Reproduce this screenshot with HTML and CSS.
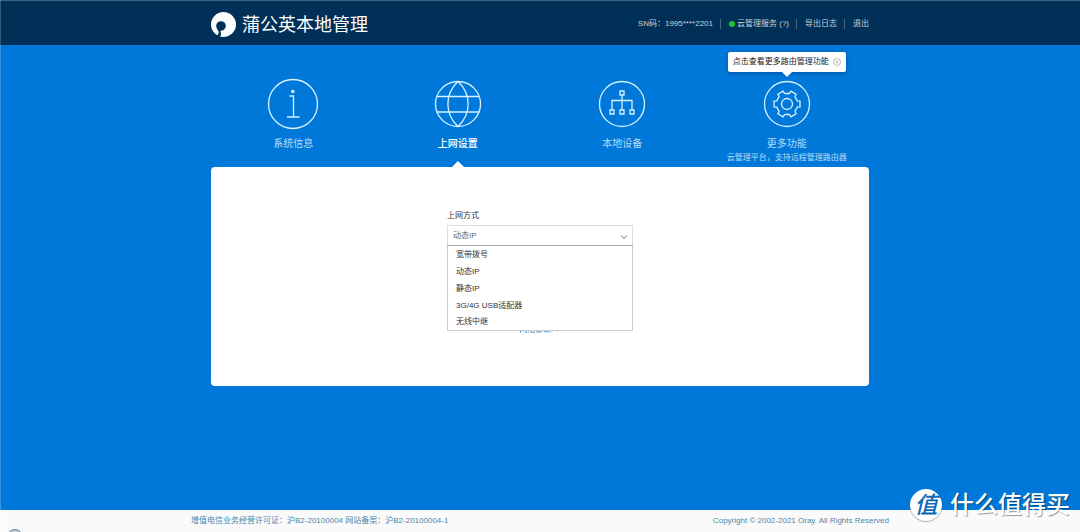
FILE: index.html
```html
<!DOCTYPE html>
<html lang="zh-CN">
<head>
<meta charset="utf-8">
<title>蒲公英本地管理</title>
<link rel="stylesheet" href="styles.css">
</head>
<body>
<header class="header">
  <div class="container header-inner">
    <div class="brand">
      <svg class="brand-logo" viewBox="0 0 24 24" aria-hidden="true">
        <circle cx="12" cy="12" r="12" fill="#fff"/>
        <circle cx="9.600" cy="13.400" r="4.600" fill="#003058"/>
        <path d="M5.400 15.500C6.200 17 7.600 18 7.400 20C7.300 21.200 6.600 22 5.600 22.500L8.200 24C9.600 22.800 10 21.200 9.400 19.600C9.100 18.600 9.200 17.800 9.800 17.300Z" fill="#003058"/>
      </svg>
      <h1 class="brand-name">蒲公英本地管理</h1>
    </div>
    <div class="tools">
      <span class="tool">SN码：1995****2201</span>
      <a class="tool" href="#cloud"><span class="status-dot"></span>云管理服务 (?)</a>
      <a class="tool" href="#log">导出日志</a>
      <a class="tool" href="#logout">退出</a>
    </div>
  </div>
</header>

<main class="main">
  <div class="container">
    <nav class="nav">
      <a class="nav-item" href="#info">
        <span class="nav-icon"><svg class="icon-large" viewBox="0 0 52 52" aria-hidden="true">
          <circle cx="26" cy="26" r="24.5"/>
          <path d="M22.500 18H26.500V39M20 39H32.500"/>
          <circle cx="25.800" cy="13.500" r="1.800" class="solid"/>
        </svg></span>
        <span class="nav-label">系统信息</span>
      </a>
      <a class="nav-item is-active" href="#network">
        <span class="nav-icon"><svg class="icon" viewBox="0 0 48 48" aria-hidden="true">
          <circle cx="24" cy="24" r="22.500"/>
          <path d="M24 1.500C10.500 14 10.500 34 24 46.500M24 1.500C37.500 14 37.500 34 24 46.500M3 16.500H45M3 32H45"/>
        </svg></span>
        <span class="nav-label">上网设置</span>
      </a>
      <a class="nav-item" href="#devices">
        <span class="nav-icon"><svg class="icon" viewBox="0 0 48 48" aria-hidden="true">
          <circle cx="24" cy="24" r="22.500"/>
          <path d="M22 11h4v4h-4zM12 30h4v4h-4zM22 30h4v4h-4zM32 30h4v4h-4zM24 15V30M14 30V20.500H34V30"/>
        </svg></span>
        <span class="nav-label">本地设备</span>
      </a>
      <div class="nav-item">
        <a class="nav-link" href="#more">
          <span class="nav-icon"><svg class="icon" viewBox="0 0 48 48" aria-hidden="true">
            <circle cx="24" cy="24" r="22.500"/>
            <circle cx="24" cy="24" r="5.500"/>
            <path d="M34.300 20.800L37 21V27L34.300 27.200L31.900 31.300L33.100 33.800L27.900 36.800L26.400 34.500H21.600L20.100 36.800L14.900 33.800L16.100 31.300L13.700 27.200L11 27V21L13.700 20.800L16.100 16.700L14.900 14.200L20.100 11.200L21.600 13.500H26.400L27.900 11.200L33.100 14.200L31.900 16.700Z"/>
          </svg></span>
          <span class="nav-label">更多功能</span>
          <span class="nav-note">云管理平台，支持远程管理路由器</span>
        </a>
        <div class="tip" role="status">
          <span>点击查看更多路由管理功能</span>
          <button class="tip-close" type="button" aria-label="关闭">
            <svg viewBox="0 0 8 8" aria-hidden="true"><circle cx="4" cy="4" r="3.500"/><path d="M2.500 2.500L5.500 5.500M5.500 2.500L2.500 5.500"/></svg>
          </button>
        </div>
      </div>
    </nav>

    <section class="card">
      <form class="form">
        <label class="field-label" for="mode">上网方式</label>
        <div class="select-wrap">
          <select class="select" id="mode">
            <option>宽带拨号</option>
            <option selected>动态IP</option>
            <option>静态IP</option>
            <option>3G/4G USB适配器</option>
            <option>无线中继</option>
          </select>
          <svg class="chevron" viewBox="0 0 8 6" aria-hidden="true"><path d="M1 1.500L4 4.500L7 1.500"/></svg>
          <ul class="options" role="listbox" aria-label="上网方式">
            <li class="option" role="option">宽带拨号</li>
            <li class="option" role="option" aria-selected="true">动态IP</li>
            <li class="option" role="option">静态IP</li>
            <li class="option" role="option">3G/4G USB适配器</li>
            <li class="option" role="option">无线中继</li>
          </ul>
        </div>
        <a class="diagnose" href="#diagnose">网络诊断&gt;&gt;</a>
      </form>
    </section>
  </div>
</main>

<footer class="footer">
  <div class="footer-inner">
    <span>增值电信业务经营许可证：沪B2-20100004 网站备案：沪B2-20100004-1</span>
    <span>Copyright © 2002-2021 Oray. All Rights Reserved</span>
  </div>
</footer>

<div class="corner-badge"></div>
<div class="watermark"><span class="watermark-seal">值</span><span>什么值得买</span></div>
</body>
</html>
```

FILE: styles.css
```css
* { box-sizing: border-box; }

body {
  display: flex;
  flex-direction: column;
  position: relative;
  min-height: 100vh;
  margin: 0;
  overflow: hidden;
  background: #0078d9;
  font-family: "Liberation Sans", "Noto Sans CJK SC", sans-serif;
  font-size: 8px;
  line-height: 12px;
  color: #444;
}

/* Light hairline down the left edge of the page */
body::before {
  content: "";
  position: absolute;
  top: 0;
  bottom: 0;
  left: 0;
  width: 1px;
  background: rgba(255, 255, 255, .2);
}

a { color: inherit; text-decoration: none; }

.container {
  width: 100%;
  max-width: 658px;
  margin: 0 auto;
}

.header {
  background: #003058;
  border-top: 1px solid #3c627f;
}

.header-inner {
  display: flex;
  align-items: center;
  justify-content: space-between;
  height: 44px;
}

.brand { display: flex; align-items: center; gap: 6px; padding-top: 3px; }
.brand-logo { width: 25px; height: 25px; }
.brand-name {
  margin: 0;
  font-size: 18px;
  line-height: 24px;
  font-weight: 400;
  color: #fff;
}

.tools { display: flex; align-items: center; padding-top: 2px; color: #c3d3df; }
.tool { display: flex; align-items: center; line-height: 10px; }
.tool + .tool { margin-left: 7px; padding-left: 8px; border-left: 1px solid #3f6380; }
.status-dot {
  width: 6px;
  height: 6px;
  margin-right: 2px;
  border-radius: 50%;
  background: #1fc32b;
}

.main { flex: 1; }

.nav {
  display: grid;
  grid-template-columns: repeat(4, 1fr);
  height: 122px;
  padding-top: 32px;
}

.nav-item { position: relative; text-align: center; color: #b5dcfa; }
.nav-icon {
  display: flex;
  align-items: center;
  justify-content: center;
  height: 54px;
}
.nav-icon svg { fill: none; stroke: #d5f2ff; stroke-width: 1.3; }
.nav-icon .solid { fill: #d5f2ff; stroke: none; }
.icon { width: 48px; height: 48px; }
.icon-large { width: 52px; height: 52px; }
.nav-label { display: block; margin-top: 5px; font-size: 10px; line-height: 16px; }
.nav-note { display: block; line-height: 12px; white-space: nowrap; }
.is-active { color: #fff; }
.is-active .nav-label { font-weight: 500; }
.is-active::after {
  content: "";
  position: absolute;
  bottom: 0;
  left: 50%;
  margin-left: -6px;
  border: 6px solid transparent;
  border-top: 0;
  border-bottom-color: #fff;
}

.tip {
  position: absolute;
  top: -25px;
  left: 50%;
  display: flex;
  align-items: center;
  gap: 4px;
  height: 20px;
  padding: 0 5px;
  transform: translateX(-50%);
  border-radius: 2px;
  background: #fff;
  box-shadow: 0 1px 4px rgba(0, 30, 70, .4);
  color: #222;
  white-space: nowrap;
}
.tip::after {
  content: "";
  position: absolute;
  top: 100%;
  left: 50%;
  margin-left: -5px;
  border: 5px solid transparent;
  border-bottom: 0;
  border-top-color: #fff;
}
.tip-close { display: flex; width: 8px; height: 8px; padding: 0; border: 0; background: none; }
.tip-close svg { width: 8px; height: 8px; fill: none; stroke: #aaa; stroke-width: .8; }

.card {
  min-height: 219px;
  padding: 42px 0 38px;
  border-radius: 4px;
  background: #fff;
}

.form { display: flex; flex-direction: column; width: 186px; margin: 0 auto; }
.field-label { line-height: 14px; margin-bottom: 2px; color: #333; }
.select-wrap { position: relative; }
.select {
  display: block;
  width: 100%;
  height: 21px;
  padding: 0 5px;
  appearance: none;
  border: 1px solid #ddd;
  border-radius: 0;
  background: #fff;
  font: inherit;
  color: #666;
}
.chevron {
  position: absolute;
  top: 9px;
  right: 5px;
  width: 8px;
  height: 6px;
  fill: none;
  stroke: #666;
}
.options {
  position: absolute;
  top: 20px;
  left: 0;
  right: 0;
  margin: 0;
  padding: 0;
  border: 1px solid #ccc;
  border-top-color: #aaa;
  background: #fff;
  list-style: none;
}
.option { padding: 0 8px; line-height: 17px; color: #333; }
.option:last-child { line-height: 16px; }
.diagnose { align-self: center; margin-top: 78px; color: #2b83c4; }

.footer { min-height: 22px; background: #fafafa; color: #4c86a8; }
.footer-inner {
  display: flex;
  justify-content: space-between;
  width: 100%;
  max-width: 698px;
  margin: 0 auto;
  padding-top: 5px;
}

.corner-badge {
  position: absolute;
  bottom: -13px;
  left: 7px;
  width: 16px;
  height: 16px;
  border: 1px solid #5d8298;
  border-radius: 50%;
  background: #c5d3dc;
}

.watermark {
  position: absolute;
  right: 10px;
  bottom: 11px;
  display: flex;
  align-items: center;
  gap: 8px;
  color: #fff;
  font-size: 24px;
  line-height: 32px;
  font-weight: 500;
  text-shadow: 1px 1px 1px rgba(0, 0, 0, .4);
}
.watermark-seal {
  width: 32px;
  height: 32px;
  border-radius: 50%;
  background: #fff;
  box-shadow: 0 1px 1px rgba(0, 0, 0, .3);
  color: #0a68b5;
  font-size: 23px;
  font-style: italic;
  text-align: center;
  text-shadow: none;
}
```
